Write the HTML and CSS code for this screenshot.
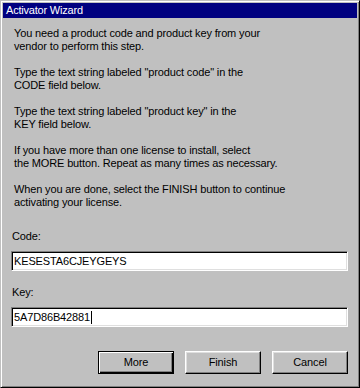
FILE: index.html
```html
<!DOCTYPE html>
<html>
<head>
<meta charset="utf-8">
<link rel="stylesheet" href="styles.css">
</head>
<body>
<div class="window">
  <div class="titlebar">Activator Wizard</div>
  <div class="content">
    <div class="instructions">
      <p>You need a product code and product key from your<br>vendor to perform this step.</p>
      <p>Type the text string labeled "product code" in the<br>CODE field below.</p>
      <p>Type the text string labeled "product key" in the<br>KEY field below.</p>
      <p>If you have more than one license to install, select<br>the MORE button. Repeat as many times as necessary.</p>
      <p>When you are done, select the FINISH button to continue<br>activating your license.</p>
    </div>
    <div class="field-label first">Code:</div>
    <div class="field">KESESTA6CJEYGEYS</div>
    <div class="field-label">Key:</div>
    <div class="field">5A7D86B42881<span class="caret"></span></div>
    <div class="buttons">
      <div class="btn default">More</div>
      <div class="btn">Finish</div>
      <div class="btn">Cancel</div>
    </div>
  </div>
</div>
</body>
</html>
```
FILE: styles.css
```css
* { box-sizing: border-box; }
html, body { margin: 0; padding: 0; }
body {
  width: 360px;
  height: 388px;
  background: #c0c0c0;
  font-family: "Liberation Sans", Arial, sans-serif;
  font-size: 11px;
  letter-spacing: -0.14px;
  color: #000;
}
.window {
  width: 360px;
  height: 388px;
  border: 1px solid;
  border-color: #c0c0c0 #000 #000 #c0c0c0;
  box-shadow: inset 1px 1px #fff, inset -1px -1px #808080;
  padding: 2px;
  background: #c0c0c0;
}
.titlebar {
  height: 15px;
  line-height: 15px;
  background: #000080;
  color: #fff;
  padding-left: 3px;
  letter-spacing: -0.2px;
}
.content {
  padding: 9px 9px 0 8px;
}
.instructions p {
  margin: 0 0 13px;
  padding-left: 3px;
  line-height: 13px;
}
.instructions p:last-child { margin-bottom: 0; }
.field-label {
  line-height: 13px;
  padding-left: 1px;
  margin-top: 15px;
}
.field-label.first { margin-top: 21px; }
.field {
  height: 20px;
  margin-top: 8px;
  border: 1px solid;
  border-color: #808080 #fff #fff #808080;
  box-shadow: inset 1px 1px #000, inset -1px -1px #dfdfdf;
  background: #fff;
  padding-left: 2px;
  line-height: 18px;
  white-space: nowrap;
}
.caret {
  display: inline-block;
  width: 1px;
  height: 13px;
  background: #000;
  vertical-align: -3px;
  margin-left: 1px;
}
.buttons {
  display: flex;
  justify-content: flex-end;
  gap: 11px;
  margin-top: 24px;
}
.btn {
  width: 76px;
  height: 23px;
  border: 1px solid;
  border-color: #fff #000 #000 #fff;
  box-shadow: inset -1px -1px #808080, inset 1px 1px #dfdfdf;
  text-align: center;
  line-height: 21px;
}
.btn.default {
  border-color: #000;
  box-shadow: inset 1px 1px #fff, inset -1px -1px #000, inset -2px -2px #808080;
}
```
